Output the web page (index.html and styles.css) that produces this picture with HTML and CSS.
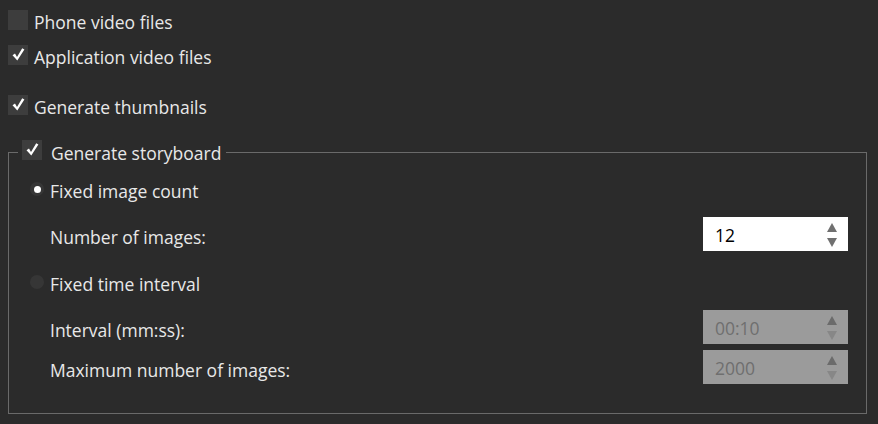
FILE: index.html
```html
<!DOCTYPE html>
<html>
<head>
<meta charset="utf-8">
<link rel="stylesheet" href="styles.css">
</head>
<body>
<div class="page">
  <div class="check-row row1">
    <span class="box"></span><span class="label">Phone video files</span>
  </div>
  <div class="check-row row2">
    <span class="box"><svg viewBox="0 0 20 20"><path d="M4.5 10.2 L7 8.6 L9 12 L14.2 3.2 L16.4 4.4 L9.3 15.6 Z" fill="#fff"/></svg></span><span class="label">Application video files</span>
  </div>
  <div class="check-row row3">
    <span class="box"><svg viewBox="0 0 20 20"><path d="M4.5 10.2 L7 8.6 L9 12 L14.2 3.2 L16.4 4.4 L9.3 15.6 Z" fill="#fff"/></svg></span><span class="label">Generate thumbnails</span>
  </div>
  <fieldset class="group">
    <legend class="legend">
      <span class="check-row">
        <span class="box"><svg viewBox="0 0 20 20"><path d="M4.5 10.2 L7 8.6 L9 12 L14.2 3.2 L16.4 4.4 L9.3 15.6 Z" fill="#fff"/></svg></span><span class="label">Generate storyboard</span>
      </span>
    </legend>
    <div class="radio-row r1">
      <span class="radio on"></span><span class="label">Fixed image count</span>
    </div>
    <div class="field-row f1">
      <span class="label">Number of images:</span>
      <div class="spin"><span class="val">12</span><span class="arrows"><span class="up"></span><span class="down"></span></span></div>
    </div>
    <div class="radio-row r2">
      <span class="radio"></span><span class="label">Fixed time interval</span>
    </div>
    <div class="field-row f2">
      <span class="label">Interval (mm:ss):</span>
      <div class="spin disabled"><span class="val">00:10</span><span class="arrows"><span class="up"></span><span class="down"></span></span></div>
    </div>
    <div class="field-row f3">
      <span class="label">Maximum number of images:</span>
      <div class="spin disabled"><span class="val">2000</span><span class="arrows"><span class="up"></span><span class="down"></span></span></div>
    </div>
  </fieldset>
</div>
</body>
</html>
```
FILE: styles.css
```css
html, body {
  margin: 0;
  padding: 0;
  background: #2b2b2b;
}
body {
  font-family: "Open Sans", "Noto Sans", sans-serif;
  font-size: 17.5px;
  color: #e8e8e8;
  width: 878px;
  height: 424px;
  overflow: hidden;
}
.page {
  padding: 10px 0 0 8px;
  display: flex;
  flex-direction: column;
}
.check-row {
  display: flex;
  align-items: center;
  height: 20px;
}
.row2 { margin-top: 15px; }
.row3 { margin-top: 30px; }
.box {
  width: 20px;
  height: 20px;
  background: #3d3d3d;
  display: inline-flex;
  flex: none;
}
.box svg { width: 20px; height: 20px; }
.label {
  margin-left: 6px;
  white-space: nowrap;
  line-height: 20px;
  padding-top: 3px;
}
.group {
  margin: 25px 0 0 0;
  padding: 0 18px 29px 21px;
  width: 859px;
  box-sizing: border-box;
  border: 1px solid #6a6a6a;
  display: flex;
  flex-direction: column;
}
.legend {
  padding: 0 5px 4px 4px;
  margin-left: -12px;
  height: 24px;
  box-sizing: border-box;
}
.legend .label { margin-left: 9px; padding-top: 6px; }
.radio-row {
  display: flex;
  align-items: center;
  height: 28px;
}
.radio-row .label { margin-left: 6px; padding-top: 4px; }
.r1 { margin-top: 11px; }
.r2 { margin-top: 17px; }
.radio {
  width: 14px;
  height: 14px;
  border-radius: 50%;
  background: #363636;
  display: inline-flex;
  align-items: center;
  justify-content: center;
  flex: none;
}
.radio.on::after {
  content: "";
  width: 7px;
  height: 7px;
  border-radius: 50%;
  background: #fff;
}
.field-row {
  display: flex;
  align-items: center;
  justify-content: space-between;
  height: 34px;
  padding-left: 14px;
}
.field-row .label { margin-left: 6px; padding-top: 6px; }
.f1 { margin-top: 14px; }
.f2 { margin-top: 14px; }
.f3 { margin-top: 6px; }
.spin {
  width: 145px;
  height: 34px;
  background: #fff;
  display: flex;
  align-items: center;
  justify-content: space-between;
  padding: 0 11px 0 12px;
  box-sizing: border-box;
  color: #000;
  font-family: "Open Sans", "Noto Sans", sans-serif;
  font-size: 17.5px;
}
.spin .val { margin-top: 2px; }
.arrows {
  display: flex;
  flex-direction: column;
  gap: 6px;
  margin-top: 1px;
}
.up {
  width: 0;
  height: 0;
  border-left: 5px solid transparent;
  border-right: 5px solid transparent;
  border-bottom: 9px solid #707070;
}
.down {
  width: 0;
  height: 0;
  border-left: 5px solid transparent;
  border-right: 5px solid transparent;
  border-top: 9px solid #707070;
}
.spin.disabled {
  background: #9b9b9b;
  color: #6f6f6f;
}
.spin.disabled .up { border-bottom-color: #6b6b6b; }
.spin.disabled .down { border-top-color: #878787; }
```
